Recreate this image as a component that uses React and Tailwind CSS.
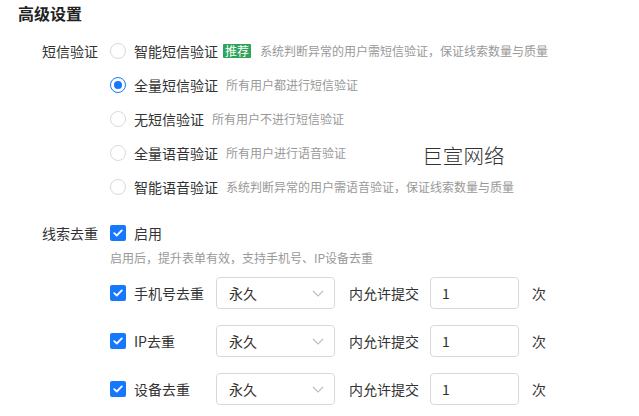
import React from 'react';

const font = { fontFamily: '"Noto Sans CJK SC", "Noto Sans", sans-serif' };

const radios = [
  { label: '智能短信验证', tag: '推荐', desc: '系统判断异常的用户需短信验证，保证线索数量与质量' },
  { label: '全量短信验证', desc: '所有用户都进行短信验证', checked: true },
  { label: '无短信验证', desc: '所有用户不进行短信验证' },
  { label: '全量语音验证', desc: '所有用户进行语音验证' },
  { label: '智能语音验证', desc: '系统判断异常的用户需语音验证，保证线索数量与质量' },
];

const dedupRows = ['手机号去重', 'IP去重', '设备去重'];

const Radio = ({ checked }) =>
  checked ? (
    <span className="w-4 h-4 rounded-full border border-[#1677ff] flex items-center justify-center shrink-0">
      <span className="w-2 h-2 rounded-full bg-[#1677ff]" />
    </span>
  ) : (
    <span className="w-4 h-4 rounded-full border border-[#d9d9d9] bg-white shrink-0" />
  );

const Checkbox = () => (
  <span className="w-4 h-4 rounded-[2px] bg-[#1677ff] flex items-center justify-center shrink-0">
    <svg width="10" height="8" viewBox="0 0 10 8" fill="none">
      <path d="M1.2 4.1 L3.8 6.5 L8.8 1.4" stroke="white" strokeWidth="1.8" strokeLinecap="round" strokeLinejoin="round" />
    </svg>
  </span>
);

export default function App() {
  return (
    <div className="relative w-[639px] h-[416px] bg-white text-[#333] overflow-hidden" style={font}>
      {/* Title */}
      <div className="pl-[18px] pt-[1px] h-[24px] leading-[24px] text-[16px] font-semibold text-[#222]">高级设置</div>

      {/* SMS verify */}
      <div className="flex mt-[10px]">
        <div className="w-[98px] h-[34px] leading-[34px] text-right text-[14px]">短信验证</div>
        <div className="ml-[12px] flex flex-col">
          {radios.map((r) => (
            <div key={r.label} className="h-[34px] flex items-center">
              <Radio checked={r.checked} />
              <span className="ml-[8px] text-[14px] text-[#333]">{r.label}</span>
              {r.tag && (
                <span className="ml-[5px] h-[14px] px-[2px] leading-[14px] text-[12px] text-white bg-[#2ea35a] rounded-[1px]">
                  {r.tag}
                </span>
              )}
              <span className={(r.tag ? 'ml-[9px]' : 'ml-[8px]') + ' text-[12px] text-[#999]'}>{r.desc}</span>
            </div>
          ))}
        </div>
      </div>

      {/* Watermark */}
      <div className="absolute left-[422px] top-[141px] text-[20.5px] leading-[28px] font-light text-[#333] tracking-[0.2px]">巨宣网络</div>

      {/* Lead dedup */}
      <div className="flex mt-[17px]">
        <div className="w-[98px] h-[24px] leading-[24px] text-right text-[14px]">线索去重</div>
        <div className="ml-[12px] flex flex-col">
          <div className="h-[24px] flex items-center">
            <Checkbox />
            <span className="ml-[8px] text-[14px]">启用</span>
          </div>
          <div className="mt-[3px] h-[20px] leading-[20px] text-[12px] text-[#999]">启用后，提升表单有效，支持手机号、IP设备去重</div>
          <div className="mt-[9px] flex flex-col gap-[16px]">
            {dedupRows.map((label) => (
              <div key={label} className="h-[32px] flex items-center">
                <div className="w-[106px] flex items-center">
                  <Checkbox />
                  <span className="ml-[8px] text-[14px]">{label}</span>
                </div>
                <div className="w-[119px] h-[32px] border border-[#d9d9d9] rounded-[4px] flex items-center justify-between pl-[12px] pr-[10px]">
                  <span className="text-[14px] text-[#333]">永久</span>
                  <svg width="12" height="7" viewBox="0 0 12 7" fill="none">
                    <path d="M1 1 L6 6 L11 1" stroke="#bfbfbf" strokeWidth="1.2" />
                  </svg>
                </div>
                <span className="ml-[14px] text-[14px]">内允许提交</span>
                <div className="ml-[11px] w-[89px] h-[32px] border border-[#d9d9d9] rounded-[4px] flex items-center pl-[11px]">
                  <span className="text-[14px] text-[#333]">1</span>
                </div>
                <span className="ml-[13px] text-[14px]">次</span>
              </div>
            ))}
          </div>
        </div>
      </div>
    </div>
  );
}
